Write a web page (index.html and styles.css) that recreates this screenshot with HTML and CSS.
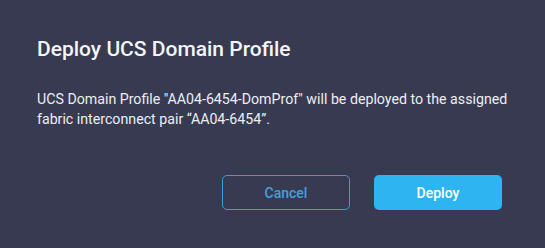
FILE: index.html
```html
<!DOCTYPE html>
<html>
<head>
<meta charset="utf-8">
<link rel="stylesheet" href="styles.css">
</head>
<body>
<div class="dialog">
  <h1 class="title">Deploy UCS Domain Profile</h1>
  <p class="message">UCS Domain Profile "AA04-6454-DomProf" will be deployed to the assigned fabric interconnect pair “AA04-6454”.</p>
  <div class="actions">
    <button class="btn btn-outline">Cancel</button>
    <button class="btn btn-primary">Deploy</button>
  </div>
</div>
</body>
</html>
```
FILE: styles.css
```css
html, body {
  margin: 0;
  padding: 0;
  background: #373a50;
}
body {
  width: 545px;
  height: 248px;
  overflow: hidden;
  font-family: Roboto, "Liberation Sans", sans-serif;
}
.dialog {
  padding: 35px 43px 0 37px;
  color: #ffffff;
}
.title {
  margin: 0;
  font-size: 21px;
  font-weight: 500;
  line-height: 28px;
  color: #f4f5f8;
}
.message {
  margin: 26px 0 0 0;
  font-size: 14.2px;
  line-height: 20px;
  color: #eceef3;
  width: 475px;
}
.actions {
  margin-top: 46px;
  display: flex;
  justify-content: flex-end;
  gap: 24px;
}
.btn {
  width: 128px;
  height: 35px;
  border-radius: 5px;
  font-family: Roboto, "Liberation Sans", sans-serif;
  font-size: 14px;
  font-weight: 500;
  cursor: pointer;
}
.btn-outline {
  background: transparent;
  border: 1.5px solid #3a9fd6;
  color: #40a2da;
}
.btn-primary {
  background: #2db4f1;
  border: none;
  color: #ffffff;
}
```
